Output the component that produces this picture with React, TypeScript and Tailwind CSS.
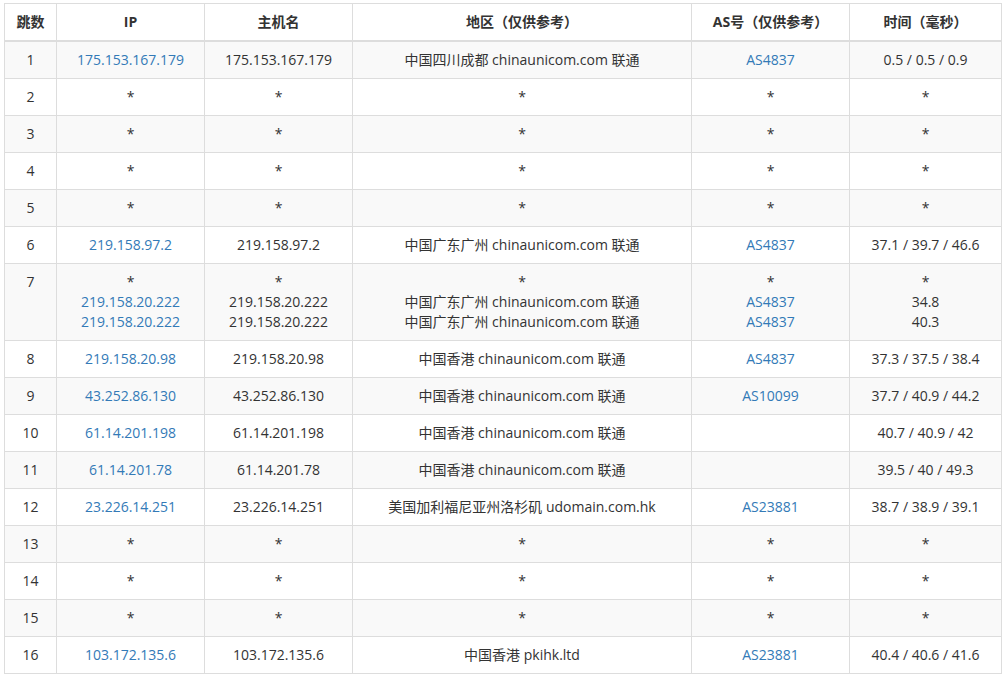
type Row = { n: number; ip: string[]; host: string[]; loc: string[]; as: string[]; t: string[] };

const star = (k = 1) => Array(k).fill("*");

const rows: Row[] = [
  { n: 1, ip: ["175.153.167.179"], host: ["175.153.167.179"], loc: ["中国四川成都 chinaunicom.com 联通"], as: ["AS4837"], t: ["0.5 / 0.5 / 0.9"] },
  ...[2, 3, 4, 5].map((n) => ({ n, ip: star(), host: star(), loc: star(), as: star(), t: star() })),
  { n: 6, ip: ["219.158.97.2"], host: ["219.158.97.2"], loc: ["中国广东广州 chinaunicom.com 联通"], as: ["AS4837"], t: ["37.1 / 39.7 / 46.6"] },
  {
    n: 7,
    ip: ["*", "219.158.20.222", "219.158.20.222"],
    host: ["*", "219.158.20.222", "219.158.20.222"],
    loc: ["*", "中国广东广州 chinaunicom.com 联通", "中国广东广州 chinaunicom.com 联通"],
    as: ["*", "AS4837", "AS4837"],
    t: ["*", "34.8", "40.3"],
  },
  { n: 8, ip: ["219.158.20.98"], host: ["219.158.20.98"], loc: ["中国香港 chinaunicom.com 联通"], as: ["AS4837"], t: ["37.3 / 37.5 / 38.4"] },
  { n: 9, ip: ["43.252.86.130"], host: ["43.252.86.130"], loc: ["中国香港 chinaunicom.com 联通"], as: ["AS10099"], t: ["37.7 / 40.9 / 44.2"] },
  { n: 10, ip: ["61.14.201.198"], host: ["61.14.201.198"], loc: ["中国香港 chinaunicom.com 联通"], as: [""], t: ["40.7 / 40.9 / 42"] },
  { n: 11, ip: ["61.14.201.78"], host: ["61.14.201.78"], loc: ["中国香港 chinaunicom.com 联通"], as: [""], t: ["39.5 / 40 / 49.3"] },
  { n: 12, ip: ["23.226.14.251"], host: ["23.226.14.251"], loc: ["美国加利福尼亚州洛杉矶 udomain.com.hk"], as: ["AS23881"], t: ["38.7 / 38.9 / 39.1"] },
  ...[13, 14, 15].map((n) => ({ n, ip: star(), host: star(), loc: star(), as: star(), t: star() })),
  { n: 16, ip: ["103.172.135.6"], host: ["103.172.135.6"], loc: ["中国香港 pkihk.ltd"], as: ["AS23881"], t: ["40.4 / 40.6 / 41.6"] },
];

const Cell = ({ lines, link }: { lines: string[]; link?: boolean }) => (
  <td className={`border border-[#ddd] px-2 py-[8px] text-center align-top leading-5 ${link ? "text-[#337ab7]" : ""}`}>
    {lines.map((l, i) => (
      <div key={i} className="min-h-5">
        {l === "*" ? <span className="text-[#333]">*</span> : l}
      </div>
    ))}
  </td>
);

export default function App() {
  return (
    <div className="bg-white pl-[4px] pr-[4px] pt-[3px] text-[14px] text-[#333]" style={{ fontFamily: '"Open Sans","Noto Sans CJK SC",sans-serif' }}>
      <table className="w-[998px] table-fixed border-collapse">
        <colgroup>
          <col className="w-[52px]" />
          <col className="w-[148px]" />
          <col className="w-[148px]" />
          <col className="w-[339px]" />
          <col className="w-[158px]" />
          <col />
        </colgroup>
        <thead>
          <tr className="h-[37px]">
            {["跳数", "IP", "主机名", "地区（仅供参考）", "AS号（仅供参考）", "时间（毫秒）"].map((h) => (
              <th key={h} className="border border-[#ddd] border-b-2 px-1 text-center font-bold text-[#333]">{h}</th>
            ))}
          </tr>
        </thead>
        <tbody>
          {rows.map((r, i) => (
            <tr key={r.n} className={i % 2 === 0 ? "bg-[#f9f9f9]" : "bg-white"}>
              <Cell lines={[String(r.n)]} />
              <Cell lines={r.ip} link />
              <Cell lines={r.host} />
              <Cell lines={r.loc} />
              <Cell lines={r.as} link />
              <Cell lines={r.t} />
            </tr>
          ))}
        </tbody>
      </table>
    </div>
  );
}
